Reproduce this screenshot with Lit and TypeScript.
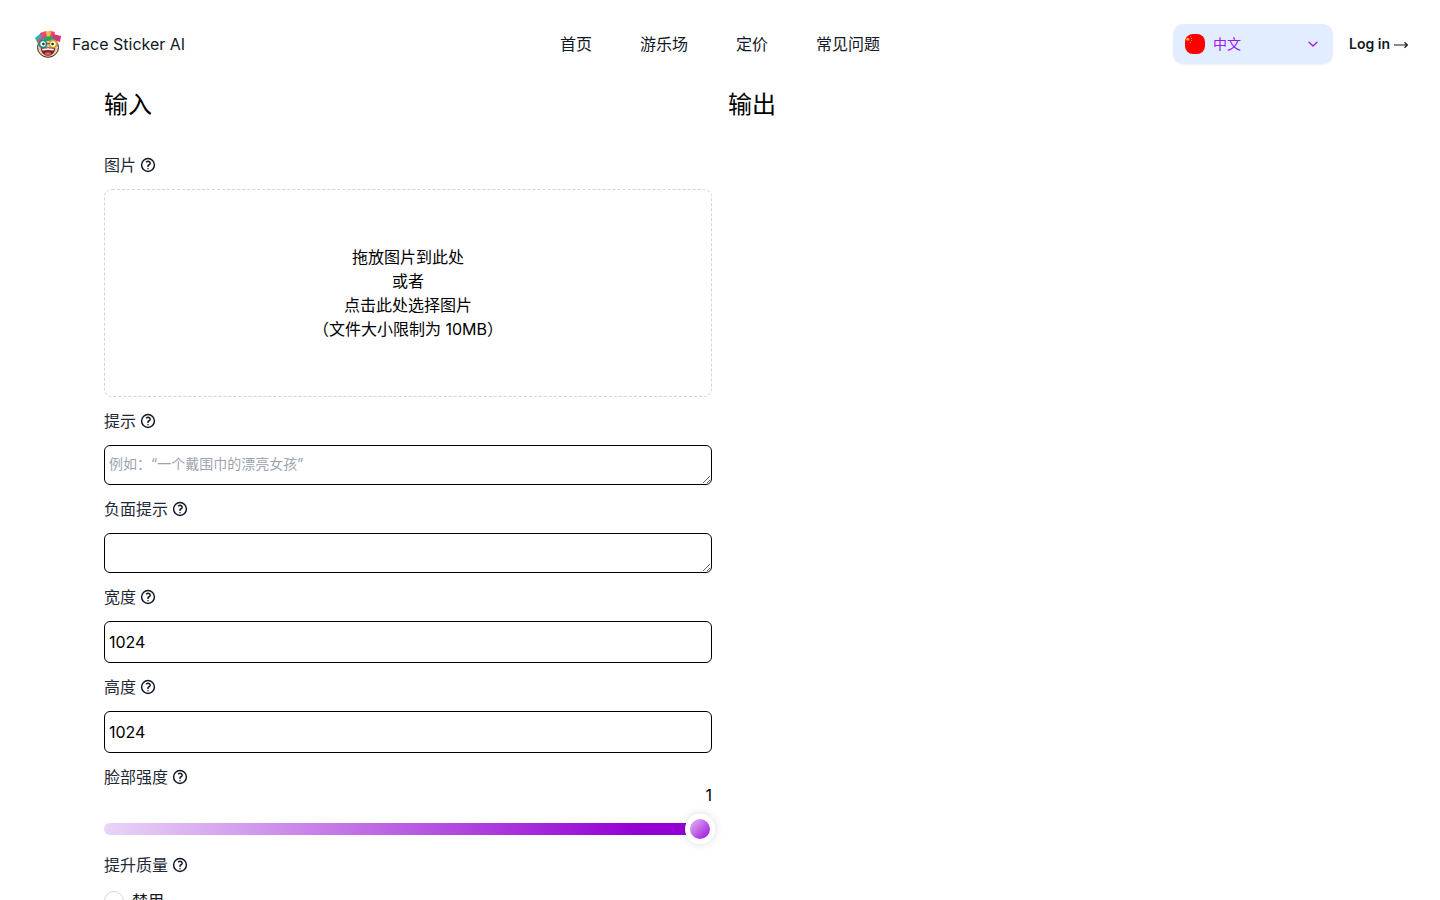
import { LitElement, html, css, svg } from "lit";
import { customElement } from "lit/decorators.js";

const helpIcon = html`<svg class="help" viewBox="0.75 0.75 22.5 22.5" fill="none" stroke="currentColor" stroke-width="2.1" stroke-linecap="round" stroke-linejoin="round">
  <path d="M9.879 7.519c1.171-1.025 3.071-1.025 4.242 0 1.172 1.025 1.172 2.687 0 3.712-.203.179-.43.326-.67.442-.745.361-1.45.999-1.45 1.827v.75M21 12a9 9 0 11-18 0 9 9 0 0118 0zm-9 5.25h.008v.008H12v-.008z"></path>
</svg>`;

const logo = html`<svg class="logo" viewBox="0 0 28 28">
  ${svg`
    <ellipse cx="14" cy="17.5" rx="10.5" ry="9.8" fill="#f6c9a8" stroke="#2b2b2b" stroke-width="1"></ellipse>
    <path d="M1 8 L7 3 L10 9 L3.5 13 Z" fill="#22b3c6"></path>
    <path d="M6 3 L12 1 L14 7 L8 9 Z" fill="#e8467c"></path>
    <path d="M12 1.5 L17 .5 L18 7 L13 8 Z" fill="#f0c23a"></path>
    <path d="M17 1 L21 2 L20 8 L16 7 Z" fill="#e8467c"></path>
    <path d="M19 4 L27 6 L26 12 L19 10 Z" fill="#d6337a"></path>
    <path d="M10 7 L19 6 L20 11 L10 11 Z" fill="#2f9e6b"></path>
    <path d="M3 10 L8 8 L9 11 L4 14 Z" fill="#e9513d"></path>
    <circle cx="9" cy="14" r="3.6" fill="#fff" stroke="#1f8f86" stroke-width="1.9"></circle>
    <circle cx="19" cy="14" r="3.6" fill="#fff" stroke="#d9a520" stroke-width="1.9"></circle>
    <path d="M12.4 13.6 H15.6" stroke="#7a5a20" stroke-width="1.2"></path>
    <circle cx="9.4" cy="14" r="1.3" fill="#222"></circle>
    <circle cx="18.6" cy="14" r="1.3" fill="#222"></circle>
    <path d="M7 18.5 Q14 17 21 18.5 Q19.5 25.5 14 25.5 Q8.5 25.5 7 18.5 Z" fill="#8a1c24" stroke="#2b2b2b" stroke-width=".6"></path>
    <path d="M8 18.8 Q14 17.8 20 18.8 L19.5 20.4 Q14 19.5 8.5 20.4 Z" fill="#fff"></path>
    <ellipse cx="14" cy="23.6" rx="3.2" ry="1.7" fill="#e2574c"></ellipse>
  `}
</svg>`;

const flag = html`<svg class="flag" viewBox="0 0 20 20">
  ${svg`
    <rect width="20" height="20" rx="8" fill="#fe0000"></rect>
    <circle cx="2.8" cy="5.2" r="1.5" fill="#fdb515"></circle>
    <rect x="5" y="2" width="1" height="1" fill="#f2880c"></rect>
    <rect x="6" y="4" width="1" height="1" fill="#f2880c"></rect>
    <rect x="6" y="6" width="1" height="1" fill="#f2880c"></rect>
    <rect x="5" y="8" width="1" height="1" fill="#f2880c"></rect>
  `}
</svg>`;

@customElement("app-root")
export class AppRoot extends LitElement {
  static styles = css`
    :host {
      display: block;
      height: 900px;
      overflow: hidden;
      background: #fff;
      color: #111827;
      font-family: Inter, "Noto Sans CJK SC", sans-serif;
      font-size: 16px;
      line-height: 24px;
    }
    header {
      display: grid;
      grid-template-columns: 1fr auto 1fr;
      align-items: center;
      height: 88px;
      padding: 0 32px;
      box-sizing: border-box;
    }
    .brand {
      display: flex;
      align-items: center;
      gap: 10px;
      color: #111827;
    }
    .logo { width: 28px; height: 28px; margin-left: 2px; }
    nav { display: flex; gap: 48px; }
    .right { display: flex; justify-content: flex-end; align-items: center; gap: 16px; }
    .lang {
      display: flex;
      align-items: center;
      width: 160px;
      height: 40px;
      box-sizing: border-box;
      padding: 0 14px 0 12px;
      background: #e2eeff;
      border-radius: 10px;
      box-shadow: 0 1px 2px rgba(0, 0, 0, 0.05);
      color: #9a14ff;
      font-size: 14px;
    }
    .flag { width: 20px; height: 20px; margin-right: 8px; }
    .chev { width: 12px; height: 12px; margin-left: auto; }
    .login {
      display: flex;
      align-items: center;
      gap: 4px;
      font-size: 14px;
      font-weight: 600;
      line-height: 24px;
      white-space: nowrap;
    }
    .arrow { width: 14px; height: 8px; margin-top: 2px; }
    main {
      display: grid;
      grid-template-columns: 608px 608px;
      gap: 16px;
      padding: 0 104px;
    }
    h2 {
      margin: 1px 0 32px;
      font-size: 24px;
      line-height: 32px;
      font-weight: 400;
      color: #000;
    }
    .label {
      display: flex;
      align-items: center;
      gap: 4px;
      height: 24px;
      margin-bottom: 12px;
      color: #1f2937;
    }
    .help { width: 16px; height: 16px; color: #111827; }
    .drop {
      display: flex;
      flex-direction: column;
      justify-content: center;
      align-items: center;
      height: 208px;
      box-sizing: border-box;
      margin-bottom: 12px;
      border: 1px dashed #d1d5db;
      border-radius: 8px;
      color: #000;
    }
    textarea, input {
      display: block;
      width: 100%;
      box-sizing: border-box;
      margin: 0 0 12px;
      padding: 4px;
      border: 1px solid #000;
      border-radius: 6px;
      background: #fff;
      font: inherit;
      color: #000;
      outline: none;
    }
    textarea { height: 40px; padding: 8px 4px 4px; font-size: 14px; line-height: 20px; }
    textarea::placeholder { color: #9ca3af; }
    input { height: 42px; }
    .value {
      margin-top: -18px;
      text-align: right;
      color: #000;
    }
    .slider {
      position: relative;
      height: 12px;
      margin: 16px 0 18px;
      border-radius: 6px;
      background: linear-gradient(90deg, #e9d5f6, #9400d3 88%);
    }
    .thumb {
      position: absolute;
      left: 581px;
      top: -9px;
      width: 30px;
      height: 30px;
      box-sizing: border-box;
      border: 5px solid #fff;
      border-radius: 50%;
      background: linear-gradient(135deg, #e2bcf2, #9c0cdc);
      box-shadow: 0 0 10px rgba(0, 0, 0, 0.14);
    }
    .radio { display: flex; align-items: center; gap: 8px; }
    .dot {
      width: 20px;
      height: 20px;
      box-sizing: border-box;
      border: 1.5px solid #d1d5db;
      border-radius: 50%;
    }
  `;

  private field(text: string) {
    return html`<div class="label"><span>${text}</span>${helpIcon}</div>`;
  }

  render() {
    return html`
      <header>
        <div class="brand">${logo}<span>Face Sticker AI</span></div>
        <nav>
          <span>首页</span>
          <span>游乐场</span>
          <span>定价</span>
          <span>常见问题</span>
        </nav>
        <div class="right">
          <div class="lang">
            ${flag}<span>中文</span>
            <svg class="chev" viewBox="0 0 12 12" fill="none" stroke="currentColor" stroke-width="1.3" stroke-linecap="round" stroke-linejoin="round"><path d="M2 4.2 L6 8 L10 4.2"></path></svg>
          </div>
          <span class="login">Log in
            <svg class="arrow" viewBox="0 0 14 8" fill="none" stroke="currentColor" stroke-width="1.2"><path d="M0 4 H13 M10.5 1.2 L13.4 4 L10.5 6.8"></path></svg>
          </span>
        </div>
      </header>
      <main>
        <section>
          <h2>输入</h2>
          ${this.field("图片")}
          <div class="drop">
            <div>拖放图片到此处</div>
            <div>或者</div>
            <div>点击此处选择图片</div>
            <div>（文件大小限制为 10MB）</div>
          </div>
          ${this.field("提示")}
          <textarea placeholder="例如：“一个戴围巾的漂亮女孩”"></textarea>
          ${this.field("负面提示")}
          <textarea></textarea>
          ${this.field("宽度")}
          <input type="text" value="1024" />
          ${this.field("高度")}
          <input type="text" value="1024" />
          ${this.field("脸部强度")}
          <div class="value">1</div>
          <div class="slider"><div class="thumb"></div></div>
          ${this.field("提升质量")}
          <div class="radio"><span class="dot"></span><span>禁用</span></div>
        </section>
        <section>
          <h2>输出</h2>
        </section>
      </main>
    `;
  }
}
